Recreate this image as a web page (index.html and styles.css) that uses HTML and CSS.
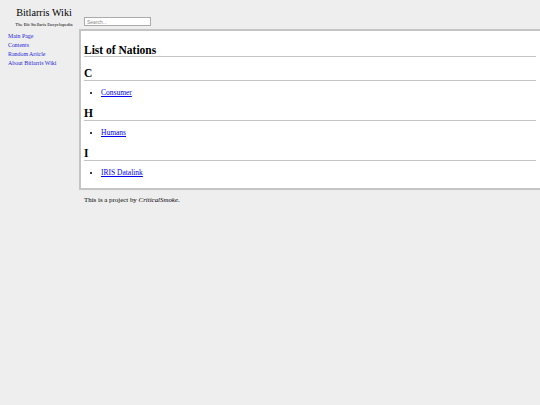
FILE: index.html
```html
<html>

<head>
	<meta charset="utf-8">
	<title>List of Nations - Bitlarris Wiki</title>
	<link rel="stylesheet" href="styles.css">
</head>

<body>
	<div id="pagina">
		<div id="lateral">
			<div class="logo">
				<p class="titulo">Bitlarris Wiki</p>
				<p class="subtitulo">The Bit Stellaris Encyclopedia</p>
			</div>
			<ul class="menu">
				<li><a href="#">Main Page</a></li>
				<li><a href="#">Contents</a></li>
				<li><a href="#">Random Article</a></li>
				<li><a href="#">About Bitlarris Wiki</a></li>
			</ul>
		</div>
		<div id="principal">
			<div class="buscador">
				<input type="text" placeholder="Search...">
			</div>
			<div id="contenido">
				<h1>List of Nations</h1>

				<h2>C</h2>
				<ul>
					<li><a href="#">Consumer</a></li>
				</ul>

				<h2>H</h2>
				<ul>
					<li><a href="#">Humans</a></li>
				</ul>

				<h2>I</h2>
				<ul>
					<li><a href="#">IRIS Datalink</a></li>
				</ul>
			</div>
			<p class="pie">This is a project by <i>CriticalSmoke</i>.</p>
		</div>
	</div>
</body>

</html>
```

FILE: styles.css
```css
body {
	margin: 0;
	background-color: #EEEEEE;
	color: #000000;
	font-family: "Liberation Serif", "Times New Roman", serif;
	overflow-x: hidden;
}

a {
	color: #0000EE;
}

#pagina {
	display: grid;
	grid-template-columns: 79px 1fr;
}

/* barra lateral */
.logo {
	text-align: center;
	padding: 6px 0 0 9px;
	width: 79px;
	box-sizing: border-box;
}

.titulo {
	margin: 0;
	font-size: 10.2px;
	line-height: 13px;
}

.subtitulo {
	margin: 3px 0 0;
	font-size: 4.7px;
	line-height: 6px;
}

.menu {
	list-style: none;
	margin: 4px 0 0;
	padding-left: 8px;
	font-size: 5.9px;
	line-height: 9px;
}

.menu a {
	text-decoration: none;
	color: #2828D8;
}

/* columna principal */
.buscador {
	padding: 17px 0 0 5px;
	height: 8px;
}

.buscador input {
	display: block;
	width: 67px;
	height: 9px;
	padding: 0 2px;
	border: 1px solid #AAAAAA;
	background-color: #FFFFFF;
	font-family: "Liberation Sans", Arial, sans-serif;
	font-size: 5px;
	box-sizing: border-box;
}

.buscador input::placeholder {
	color: #888888;
}

#contenido {
	margin-top: 4px;
	background-color: #FFFFFF;
	border: 2px solid #C4C4C4;
	border-right: none;
	padding: 14px 4px 11px 3px;
}

#contenido h1 {
	margin: 0;
	font-size: 11.5px;
	line-height: 11px;
	border-bottom: 1px solid #C4C4C4;
}

#contenido h2 {
	margin: 11px 0 0;
	padding-bottom: 1px;
	font-size: 11.5px;
	line-height: 11px;
	border-bottom: 1px solid #C4C4C4;
}

#contenido ul {
	margin: 7px 0 0;
	padding-left: 17px;
	font-size: 7.5px;
	line-height: 9px;
}

.pie {
	margin: 5px 0 0 5px;
	font-size: 6.9px;
	line-height: 9px;
}
```
